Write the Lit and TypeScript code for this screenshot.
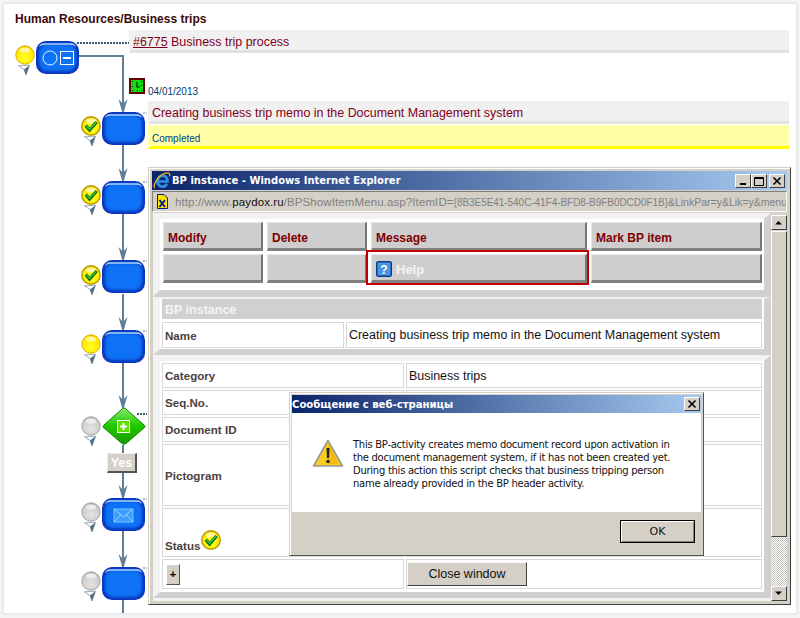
import { LitElement, html, css, svg } from "lit";
import { customElement } from "lit/decorators.js";

const check = svg`<path d="M4.8 9.6 L8.6 14 L15.6 6" fill="none" stroke="#0b6a20" stroke-width="3.2"/><path d="M5 9.6 L8.6 13.4 L15 6.4" fill="none" stroke="#32d030" stroke-width="1.3"/>`;

const ball = (kind: string) => svg`
  <circle cx="10" cy="10" r="9.2" fill="url(#${kind === "grey" ? "bg" : "by"})" stroke="${kind === "grey" ? "#a4a4a4" : kind === "check" ? "#b89a00" : "#d8b000"}" stroke-width="${kind === "check" ? 1.5 : 1}"/>
  <ellipse cx="10" cy="5" rx="5" ry="2.6" fill="#fff" opacity=".6"/>
  ${kind === "check" ? check : ""}`;

const bulb = (kind: string, top: number, left: number) => html`
  <svg class="abs" style="left:${left}px;top:${top}px" width="20" height="32" viewBox="0 0 20 32">
    ${ball(kind)}
    <path d="M3.5 20.8 L14.5 20.2 L11 30 L9 24.5 Z" fill="#fff" stroke="#7d97aa" stroke-width=".8"/>
    <path d="M14.5 20.2 L11 30 L9 24.5 Z" fill="#4f6f86"/>
  </svg>`;

const node = (top: number, inner: unknown = "", left = 102) => html`
  <svg class="abs" style="left:${left}px;top:${top}px" width="44" height="34" viewBox="0 0 44 34">
    <rect x="0" y="0" width="43" height="33" rx="10" fill="#0a34bc"/>
    <rect x="3" y="3" width="37" height="27" rx="8" fill="#0b72f6" filter="url(#soft)"/>
    <path d="M8 2.2 H35 Q39 2.2 40 6 Q38 3.8 34 3.8 H9 Q5 3.8 3 6 Q4 2.2 8 2.2 Z" fill="#a8d2ff"/>
    ${inner}
  </svg>`;

@customElement("app-root")
export class AppRoot extends LitElement {
  static styles = css`
    :host { display: block; width: 800px; height: 618px; background: #f4f4f4; font-family: "Liberation Sans", Arial, sans-serif; overflow: hidden; }
    .card { position: relative; margin: 4px; width: 792px; height: 609px; background: #fff; box-shadow: 0 0 2px 1px #e0e0e0; }
    .stage { position: absolute; left: -4px; top: -4px; width: 800px; height: 618px; overflow: hidden; }
    .abs { position: absolute; }
    .heading { left: 15px; top: 12px; font-size: 12px; line-height: 14px; font-weight: bold; color: #3c0a0a; }
    .bar { position: absolute; box-sizing: border-box; background: #f0f0f0; border-bottom: 3px solid #e2e2e2; border-left: 3px solid #f0f0f0; font-size: 12.45px; color: #800020; padding: 4px 0 0 1px; display: flex; align-items: center; white-space: pre; }
    .bar a { color: #800020; text-decoration: underline; }
    .proc { left: 129px; top: 30px; width: 660px; height: 23px; }
    .memo { left: 148px; top: 101px; width: 641px; height: 23px; }
    .done { position: absolute; box-sizing: border-box; left: 148px; top: 125px; width: 641px; height: 24px; background: #ffffa8; border-bottom: 3px solid #ffff00; border-left: 3px solid #ffffa8; font-size: 10px; color: #00408c; padding: 8px 0 0 1px; }
    .date { left: 148px; top: 86px; font-size: 10px; line-height: 12px; color: #003a70; }
    .yes { position: absolute; box-sizing: border-box; left: 107px; top: 453px; width: 30px; height: 20px; background: #d4d0c8; border: 1px solid; border-color: #eee #555 #555 #eee; border-width: 1px 2px 2px 1px; color: #fff; font-weight: bold; font-size: 12.5px; display: flex; align-items: center; justify-content: center; }

    .win { position: absolute; box-sizing: border-box; left: 148px; top: 167px; width: 643px; height: 438px; background: #d4d0c8; border: 1px solid; border-color: #d4d0c8 #404040 #404040 #d4d0c8; padding: 3px; display: flex; flex-direction: column; box-shadow: inset 1px 1px 0 #fff; }
    .title { height: 19px; flex: none; display: flex; align-items: center; background: linear-gradient(90deg, #0a246a, #a6caf0); color: #fff; font: bold 10px "DejaVu Sans", sans-serif; padding-right: 2px; }
    .title span { flex: 1; white-space: nowrap; }
    .ie { margin: 0 1px 0 1px; flex: none; }
    .ctl { box-sizing: border-box; width: 16px; height: 14px; background: #d4d0c8; border: 1px solid; border-color: #fff #404040 #404040 #fff; display: flex; align-items: center; justify-content: center; flex: none; }
    .gapl { margin-left: 2px; }
    .addr { height: 21px; margin-top: 1px; flex: none; box-sizing: border-box; border: 1px solid; border-color: #808080 #fff #fff #808080; display: flex; align-items: center; gap: 7px; padding-left: 4px; font-size: 11.5px; letter-spacing: .1px; color: #808080; white-space: nowrap; overflow: hidden; }
    .addr b { font-weight: normal; color: #111; }
    .guid { font-size: 10px; letter-spacing: -.05px; }
    .tail { font-size: 10.5px; letter-spacing: 0; }
    .view { flex: 1; display: flex; min-height: 0; margin-top: 1px; padding-left: 1px; }
    .page { flex: 1; background: #f2f2f2; display: flex; flex-direction: column; min-width: 0; }
    .panel { box-sizing: border-box; background: #fff; border-style: solid; border-width: 2px 7px 6px 7px; border-color: #f2f2f2 #d0d0d0 #d0d0d0 #f2f2f2; padding: 0 2px 1px 2px; }
    .panel.menu { border-width: 6px 7px 7px 7px; padding: 3px 2px 7px 3px; }
    .panel.fields { border-width: 6px 7px 6px 7px; padding: 2px 2px 3px 2px; }
    .menuGrid { display: grid; grid-template-columns: 104px 104px 220px 171px; grid-auto-rows: 29px; row-gap: 3px; }
    .mi { box-sizing: border-box; margin-right: 4px; background: #cecece; border-style: solid; border-color: #e8e8e8 #777 #808080 #e8e8e8; border-width: 1px 2px 3px 1px; color: #800000; font-weight: bold; font-size: 12px; display: flex; align-items: center; padding: 4px 0 0 4px; position: relative; }
    .mi:nth-child(4n) { margin-right: 0; }
    .help { color: #f4f4f4; font-size: 13px; gap: 4px; padding-top: 2px; }
    .help span { position: relative; top: 1px; }
    .redbox { position: absolute; box-sizing: border-box; left: -6px; top: -5px; right: -4px; bottom: -5px; border: 2px solid #c00000; }
    .sect { box-sizing: border-box; height: 20px; background: #d0d0d0; color: #f4f4f4; font-weight: bold; font-size: 12.5px; display: flex; align-items: center; padding: 2px 0 0 3px; margin-bottom: 3px; }
    .row { display: grid; gap: 2px; margin-bottom: 2px; }
    .row.last { margin-bottom: 0; }
    .r1 { grid-template-columns: 182px 416px; }
    .r2 { grid-template-columns: 242px 356px; }
    .h25 { grid-template-rows: 25px; }
    .h26 { grid-template-rows: 26px; }
    .h62 { grid-template-rows: 62px; }
    .h49 { grid-template-rows: 49px; }
    .h30 { grid-template-rows: 30px; }
    .c { box-sizing: border-box; background: #fff; border: 1px solid #d8d8d8; display: flex; align-items: center; padding-left: 2px; font-size: 12.45px; color: #111; }
    .lab { font-weight: bold; font-size: 11.6px; color: #4c4040; }
    .stat { align-items: flex-end; padding-bottom: 4px; }
    .stat svg { margin: 0 0 2px 1px; }
    .flush { padding-left: 0; }
    .plus { box-sizing: border-box; width: 14px; height: 21px; margin-left: 1px; background: #d4d0c8; border: 1px solid; border-color: #fff #555 #555 #fff; font-weight: bold; font-size: 11px; display: flex; align-items: center; justify-content: center; color: #000; }
    .close { box-sizing: border-box; width: 120px; height: 24px; background: #d4d0c8; border: 1px solid; border-color: #fff #404040 #404040 #fff; display: flex; align-items: center; justify-content: center; font-size: 12.5px; color: #111; }
    .sb { width: 16px; flex: none; display: flex; flex-direction: column; background: #d4d0c8; padding-top: 2px; }
    .sbtn { box-sizing: border-box; height: 15px; background: #d4d0c8; border: 1px solid; border-color: #fff #404040 #404040 #fff; display: flex; align-items: center; justify-content: center; flex: none; }
    .thumb { flex: 0 0 306px; box-sizing: border-box; border: 1px solid; border-color: #fff #404040 #404040 #fff; background: #d4d0c8; margin-top: 1px; }
    .dith { flex: 1; background: repeating-conic-gradient(#fff 0 25%, #c8c4bc 0 50%) 0 0 / 2px 2px; }

    .dlg { position: absolute; box-sizing: border-box; left: 289px; top: 392px; width: 415px; height: 164px; background: #d4d0c8; border: 1px solid; border-color: #d4d0c8 #555 #555 #d4d0c8; padding: 2px; display: flex; flex-direction: column; box-shadow: inset 1px 1px 0 #fff; }
    .dt { height: 18px; flex: none; display: flex; align-items: center; background: linear-gradient(90deg, #0a246a, #a6caf0); color: #fff; font: bold 10.1px "DejaVu Sans", sans-serif; padding-right: 1px; }
    .dt span { flex: 1; }
    .db { height: 99px; flex: none; background: #fff; display: flex; padding: 25px 0 0 20px; box-sizing: border-box; gap: 9px; }
    .db svg { flex: none; margin-top: 1px; }
    .db p { margin: 0; font: 10px/13px "DejaVu Sans", sans-serif; letter-spacing: -.27px; color: #111; white-space: pre; }
    .df { flex: 1; display: flex; justify-content: flex-end; align-items: flex-start; padding: 8px 6px 0 0; }
    .ok { box-sizing: border-box; width: 75px; height: 23px; border: 1px solid #000; box-shadow: inset 1px 1px 0 #fff, inset -1px -1px 0 #808080; display: flex; align-items: center; justify-content: center; font: 11px "DejaVu Sans", sans-serif; color: #111; }
  `;

  render() {
    return html`
    <div class="card"><div class="stage">
      <svg width="0" height="0" class="abs"><defs>
        <filter id="soft" x="-10%" y="-10%" width="120%" height="120%"><feGaussianBlur stdDeviation="1.8"/></filter>
        <radialGradient id="by" cx=".5" cy=".65" r=".65"><stop offset="0" stop-color="#ffff20"/><stop offset=".8" stop-color="#ffe800"/><stop offset="1" stop-color="#e8c000"/></radialGradient>
        <radialGradient id="bg" cx=".5" cy=".65" r=".65"><stop offset="0" stop-color="#e4e4e4"/><stop offset=".8" stop-color="#cccccc"/><stop offset="1" stop-color="#b0b0b0"/></radialGradient>
        <linearGradient id="dg" x1="0" y1="0" x2="0" y2="1"><stop offset="0" stop-color="#8ee870"/><stop offset=".45" stop-color="#22cc00"/><stop offset="1" stop-color="#169a00"/></linearGradient>
      </defs></svg>

      <div class="abs heading">Human Resources/Business trips</div>

      <svg class="abs" style="left:0;top:0" width="800" height="618">
        <path d="M79 56 H123 V104 M123 145 V174 M123 214 V253 M123 294 V323 M123 363 V401 M123 445 V453 M123 472 V491 M123 531 V560 M123 600 V613" fill="none" stroke="#5f7f96" stroke-width="2"/>
        ${[112, 181, 260, 330, 408, 498, 567].map((y) => svg`<path d="M118.5 ${y - 13} L123 ${y - 8} L127.5 ${y - 13} L123.8 ${y} L122.2 ${y} Z" fill="#5f7f96"/>`)}
        <path d="M77 43 H129" stroke="#3c5a70" stroke-width="2" stroke-dasharray="2 1" fill="none"/>
        <path d="M137 414 H147" stroke="#3c5a70" stroke-width="2" stroke-dasharray="2 1" fill="none"/>
        ${[113, 182, 261, 331, 499, 568].map((y) => svg`<path d="M143 ${y} H147" stroke="#5f7f96" stroke-dasharray="2 1"/>`)}
      </svg>

      ${bulb("yellow", 45, 15)}
      ${node(41, svg`<circle cx="14" cy="17" r="7" fill="none" stroke="#e8f4ff" stroke-width="1"/><rect x="24.5" y="10.5" width="13" height="13" fill="none" stroke="#fff"/><rect x="27" y="16" width="8" height="2" fill="#fff"/>`, 36)}

      <div class="bar proc"><a>#6775</a> Business trip process</div>

      <svg class="abs" style="left:129px;top:78px" width="16" height="16" viewBox="0 0 16 16">
        <rect x="1" y="1" width="14" height="14" fill="#10e010" stroke="#600000" stroke-width="2"/>
        <path d="M8 4 V9 H11" stroke="#111" stroke-width="1.2" fill="none"/>
        <path d="M3 3h1v1H3zM12 3h1v1h-1zM3 8h1v1H3zM3 12h1v1H3zM8 12h1v1H8zM12 12h1v1h-1zM12 7h1v1h-1z" fill="#111"/>
      </svg>
      <div class="abs date">04/01/2013</div>
      <div class="bar memo">Creating business trip memo in the Document Management system</div>
      <div class="done">Completed</div>

      ${bulb("check", 116, 81)} ${node(112)}
      ${bulb("check", 185, 81)} ${node(181)}
      ${bulb("check", 265, 81)} ${node(260)}
      ${bulb("yellow", 334, 81)} ${node(330)}
      ${bulb("grey", 416, 81)}
      <svg class="abs" style="left:101px;top:407px" width="46" height="40" viewBox="0 0 46 40">
        <path d="M23 1 Q24 1 25 2 L43 18 Q45 19.5 43 21 L25 36.5 Q23 38 21 36.5 L3 21 Q1 19.5 3 18 L21 2 Q22 1 23 1 Z" fill="url(#dg)" stroke="#128a00"/>
        <rect x="16.5" y="13.5" width="12" height="12" fill="#5fe000" stroke="#fff"/>
        <path d="M19 19.5 H26 M22.5 16 V23" stroke="#fff" stroke-width="2"/>
      </svg>
      <div class="yes">Yes</div>
      ${bulb("grey", 502, 81)}
      ${node(498, svg`<rect x="12" y="11" width="19" height="13" fill="#3c9cff" stroke="#7cc4ff"/><path d="M12 11 L21.5 19 L31 11 M12 24 L19 16.5 M31 24 L24 16.5" fill="none" stroke="#a8d8ff" stroke-width=".9"/>`)}
      ${bulb("grey", 571, 81)} ${node(567)}

      <div class="win">
        <div class="title">
          <svg class="ie" width="18" height="19" viewBox="0 0 18 19">
            <path d="M4 10.5 H14.5 C14.8 6 11 3.8 8 5 C4 6.5 3.2 13 7 15 C10 16.4 12.6 15.2 14 13" fill="none" stroke="#2f8ee8" stroke-width="2.6"/>
            <path d="M1.6 17 C-.4 14 5 5 11 2.6 C15 1 17.6 2 16.6 5.4" fill="none" stroke="#f0b020" stroke-width="1.3"/>
          </svg>
          <span>BP instance - Windows Internet Explorer</span>
          <div class="ctl"><svg width="10" height="10"><rect x="2" y="7" width="6" height="2" fill="#000"/></svg></div>
          <div class="ctl"><svg width="10" height="10"><path d="M.5 1.5 H9.5 V9.5 H.5 Z M.5 2.5 H9.5" fill="none" stroke="#000"/></svg></div>
          <div class="ctl gapl"><svg width="10" height="10"><path d="M1.5 1.5 L8.5 8.5 M8.5 1.5 L1.5 8.5" stroke="#000" stroke-width="1.6"/></svg></div>
        </div>
        <div class="addr">
          <svg width="11" height="15" viewBox="0 0 11 15" style="flex:none"><path d="M.5 .5 H7 L10.5 4 V14.5 H.5 Z" fill="#ffe000" stroke="#001a90"/><path d="M2.5 6 L8 13 M8 6 L2.5 13" stroke="#001a90" stroke-width="2"/></svg>
          <div>http://www.<b>paydox.ru</b>/BPShowItemMenu.asp?ItemID=<span class="guid">{8B3E5E41-540C-41F4-BFD8-B9FB0DCD0F1B}</span><span class="tail">&amp;LinkPar=y&amp;Lik=y&amp;menu</span></div>
        </div>
        <div class="view">
          <div class="page">
            <div class="panel menu">
              <div class="menuGrid">
                <div class="mi">Modify</div><div class="mi">Delete</div><div class="mi">Message</div><div class="mi">Mark BP item</div>
                <div class="mi"></div><div class="mi"></div>
                <div class="mi help">
                  <svg width="16" height="16" viewBox="0 0 16 16"><rect x=".5" y=".5" width="15" height="15" rx="1.5" fill="#2a70c8" stroke="#0a3c80"/><rect x="2" y="2" width="12" height="12" fill="#4a94e0"/><text x="8" y="12.5" font-size="12" font-weight="bold" font-family="Liberation Sans" fill="#fff" text-anchor="middle">?</text></svg>
                  <span>Help</span><div class="redbox"></div>
                </div>
                <div class="mi"></div>
              </div>
            </div>
            <div class="panel">
              <div class="sect">BP instance</div>
              <div class="row r1 h26 last">
                <div class="c lab">Name</div><div class="c">Creating business trip memo in the Document Management system</div>
              </div>
            </div>
            <div class="panel fields">
              <div class="row r2 h25"><div class="c lab">Category</div><div class="c">Business trips</div></div>
              <div class="row r2 h25"><div class="c lab">Seq.No.</div><div class="c"></div></div>
              <div class="row r2 h25"><div class="c lab">Document ID</div><div class="c"></div></div>
              <div class="row r2 h62"><div class="c lab">Pictogram</div><div class="c"></div></div>
              <div class="row r2 h49">
                <div class="c lab stat">Status<svg width="20" height="20" viewBox="0 0 20 20">${ball("check")}</svg></div>
                <div class="c"></div>
              </div>
              <div class="row r2 h30 last">
                <div class="c"><div class="plus">+</div></div>
                <div class="c flush"><div class="close">Close window</div></div>
              </div>
            </div>
          </div>
          <div class="sb">
            <div class="sbtn"><svg width="8" height="5"><path d="M0 4.5 H7 L3.5 1 Z" fill="#000"/></svg></div>
            <div class="thumb"></div>
            <div class="dith"></div>
            <div class="sbtn"><svg width="8" height="5"><path d="M0 .5 H7 L3.5 4 Z" fill="#000"/></svg></div>
          </div>
        </div>
      </div>

      <div class="dlg">
        <div class="dt"><span>Сообщение с веб-страницы</span>
          <div class="ctl"><svg width="10" height="10"><path d="M1.5 1.5 L8.5 8.5 M8.5 1.5 L1.5 8.5" stroke="#000" stroke-width="1.6"/></svg></div>
        </div>
        <div class="db">
          <svg width="32" height="30" viewBox="0 0 32 30"><path d="M16 1.5 L30.5 27 H1.5 Z" fill="#f8cc20" stroke="#999" stroke-width="1.6" stroke-linejoin="round"/><path d="M16 4 L27 25 H16 Z" fill="#e8a800" opacity=".5"/><path d="M14.5 9 H17.5 L17 19 H15 Z" fill="#222"/><circle cx="16" cy="22.5" r="1.8" fill="#222"/></svg>
          <p>This BP-activity creates memo document record upon activation in
the document management system, if it has not been created yet.
During this action this script checks that business tripping person
name already provided in the BP header activity.</p>
        </div>
        <div class="df"><div class="ok">OK</div></div>
      </div>
    </div></div>`;
  }
}
